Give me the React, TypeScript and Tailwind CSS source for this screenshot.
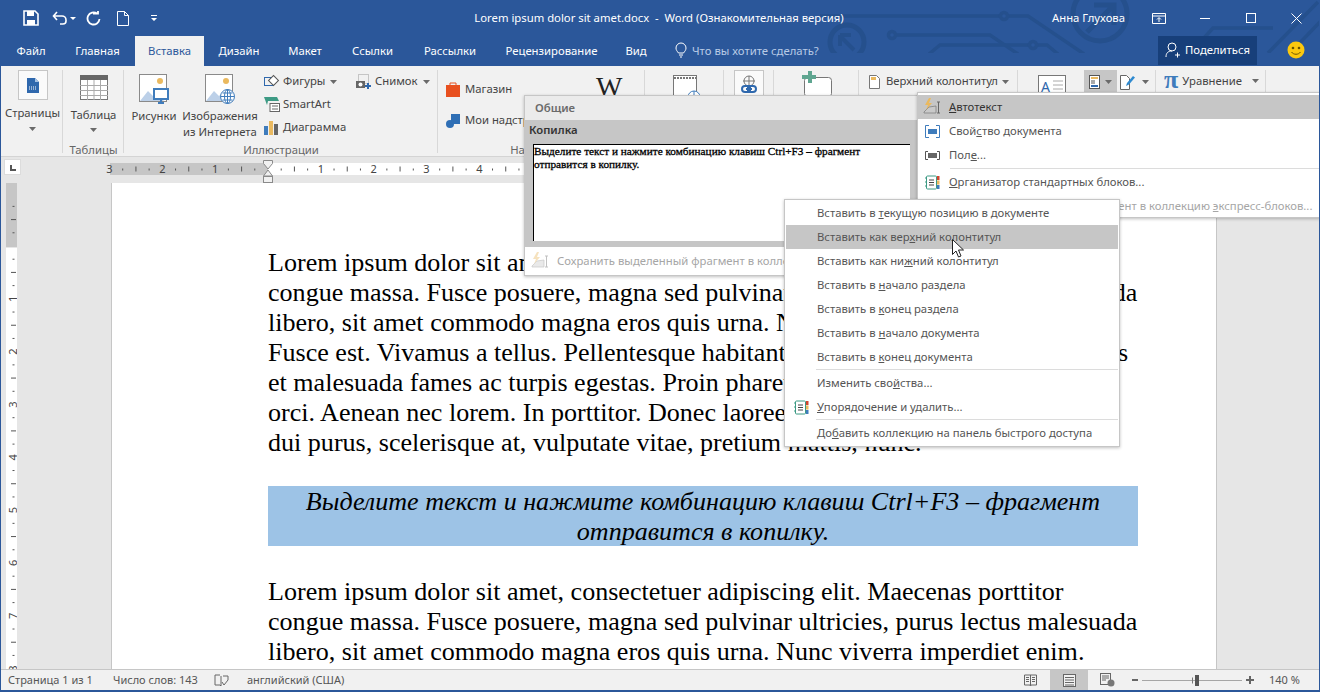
import React from "react";

const UI = "font-['Noto_Sans',sans-serif]";

const para1 = [
  "Lorem ipsum dolor sit amet, consectetuer adipiscing elit. Maecenas porttitor",
  "congue massa. Fusce posuere, magna sed pulvinar ultricies, purus lectus malesuada",
  "libero, sit amet commodo magna eros quis urna. Nunc viverra imperdiet enim.",
  "Fusce est. Vivamus a tellus. Pellentesque habitant morbi tristique senectus et netus",
  "et malesuada fames ac turpis egestas. Proin pharetra nonummy pede. Mauris et",
  "orci. Aenean nec lorem. In porttitor. Donec laoreet nonummy augue. Suspendisse",
  "dui purus, scelerisque at, vulputate vitae, pretium mattis, nunc.",
];
const para2 = para1.slice(0, 3);

const tabs = [
  ["Файл", 58], ["Главная", 75], ["Вставка", 69], ["Дизайн", 70], ["Макет", 62],
  ["Ссылки", 73], ["Рассылки", 82], ["Рецензирование", 121], ["Вид", 48],
] as const;

function Caret({ className = "" }: { className?: string }) {
  return (
    <svg width="7" height="4" viewBox="0 0 7 4" className={className}>
      <path d="M0 0h7L3.5 4z" fill="#6a6a6a" />
    </svg>
  );
}

function Group({ w, label, children, labelClass = "" }: { w: number; label?: string; children?: React.ReactNode; labelClass?: string }) {
  return (
    <div className="relative flex h-full shrink-0 flex-col" style={{ width: w }}>
      <div className="flex min-h-0 flex-1 overflow-visible">{children}</div>
      <div className={`h-[13px] text-center text-[11.3px] leading-[14px] text-[#666] ${labelClass}`}>{label}</div>
      <div className="absolute right-0 top-[4px] h-[83px] w-px bg-[#d8d8d8]" />
    </div>
  );
}

function SmallItem({ icon, text, caret }: { icon: React.ReactNode; text: string; caret?: boolean }) {
  return (
    <div className="flex h-[23px] items-center gap-[3px] whitespace-nowrap text-[11.3px] text-[#444]">
      <span className="flex w-[17px] shrink-0 justify-center">{icon}</span>
      {text}
      {caret && <Caret className="ml-[2px]" />}
    </div>
  );
}

function PictureIcon({ online }: { online?: boolean }) {
  return (
    <svg width="30" height="30" viewBox="0 0 30 30">
      <rect x=".5" y=".5" width="27" height="27" fill="#fff" stroke="#8a8a8a" />
      <circle cx="21" cy="7" r="3" fill="#eab95f" />
      <path d="M1 27l8-10 5 5 3-3 8 8z" fill="#bcd0e8" />
      {online ? (
        <g fill="#fff" stroke="#3f7cbc">
          <circle cx="22.500" cy="22.500" r="7" />
          <path d="M15.500 22.500h14M22.500 15.500v14M17.500 19h10M17.500 26h10" fill="none" />
          <ellipse cx="22.500" cy="22.500" rx="3" ry="7" fill="none" />
        </g>
      ) : (
        <g>
          <rect x="15" y="15" width="14" height="10" fill="#fff" stroke="#3f7cbc" strokeWidth="2" />
          <path d="M19 29h6M22 25v4" stroke="#3f7cbc" strokeWidth="2" />
        </g>
      )}
    </svg>
  );
}

function HRuler() {
  const base = 267;
  const u = 52.83;
  const items: React.ReactNode[] = [];
  for (let i = -12; i <= 20; i++) {
    const x = base + (i * u) / 4;
    if (x < 105 || x > 560 || i === 0) continue;
    const n = Math.abs(i) / 4;
    if (i % 4 === 0) {
      items.push(<text key={i} x={x} y={10} fontSize="11" fill="#444" textAnchor="middle" fontFamily="Noto Sans">{n}</text>);
    } else if (i % 2 === 0) {
      items.push(<path key={i} d={`M${x} 3.5v5`} stroke="#555" />);
    } else {
      items.push(<path key={i} d={`M${x} 5.5v2`} stroke="#555" />);
    }
  }
  return (
    <svg width="560" height="26" viewBox="0 0 560 26" className="block">
      <g transform="translate(0 6)">
        <rect x="109" width="158" height="12" fill="#c6c6c6" />
        <rect x="267" width="293" height="12" fill="#fff" />
        {items}
        <path d="M262.5 -2.5h9v3l-4.5 5.5l-4.5-5.5z" fill="#f1f1f1" stroke="#8a8a8a" />
        <path d="M262.5 13l4.5-6 4.5 6z" fill="#f1f1f1" stroke="#8a8a8a" />
        <rect x="262.5" y="13.5" width="9" height="6" fill="#f1f1f1" stroke="#8a8a8a" />
      </g>
    </svg>
  );
}

function VRuler() {
  const u = 52.83;
  const zero = 246;
  const items: React.ReactNode[] = [];
  for (let i = -3; i <= 36; i++) {
    const y = zero + (i * u) / 4;
    if (i === 0) continue;
    if (i % 4 === 0) {
      const n = Math.abs(i) / 4;
      items.push(
        <text key={i} x={0} y={0} fontSize="11" fill="#444" textAnchor="middle" fontFamily="Noto Sans" transform={`translate(10.5 ${y}) rotate(-90)`}>{n}</text>
      );
    } else if (i % 2 === 0) {
      items.push(<path key={i} d={`M5 ${y}h5`} stroke="#555" />);
    } else {
      items.push(<path key={i} d={`M6.500 ${y}h2`} stroke="#555" />);
    }
  }
  return (
    <svg width="11" height="486" viewBox="0 183 11 486" className="block">
      <rect x="0" y="183" width="11" height="64" fill="#c6c6c6" />
      <rect x="0" y="248" width="11" height="421" fill="#fff" />
      {items}
    </svg>
  );
}

function Organizer() {
  return (
    <svg width="15" height="15" viewBox="0 0 15 15">
      <rect x="1.5" y="1" width="10" height="13" rx="1" fill="#fff" stroke="#3d9a84" />
      <path d="M4 5h5M4 7.5h5M4 10h5" stroke="#444" />
      <path d="M0 3h2M0 7h2M0 11h2" stroke="#3d9a84" />
      <rect x="12" y="1" width="2.5" height="4" fill="#d2452f" />
      <rect x="12" y="5.5" width="2.5" height="4" fill="#eab95f" />
      <rect x="12" y="10" width="2.5" height="4" fill="#3f7cbc" />
    </svg>
  );
}

function AutoTextIcon({ muted }: { muted?: boolean }) {
  return (
    <svg width="18" height="18" viewBox="0 0 18 18" className={muted ? "opacity-40" : ""}>
      <path d="M1 14l5-5 7-1v7H1z" fill="#c9c9c9" stroke="#777" strokeWidth=".7" />
      <path d="M6 0L2 7h3l-2 5 6-7H6l2-5z" fill="#eab95f" />
      <path d="M14 4h3M14 15h3M15.5 4v11" stroke="#666" fill="none" />
    </svg>
  );
}

function CtxRow({ children, active, icon }: { children: React.ReactNode; active?: boolean; icon?: React.ReactNode }) {
  return (
    <div className={`flex h-[24px] items-center whitespace-nowrap ${active ? "bg-[#c6c6c6]" : ""}`}>
      <span className="flex w-[31px] justify-center">{icon}</span>
      <span>{children}</span>
    </div>
  );
}

function RightRow({ children, icon, active, muted }: { children: React.ReactNode; icon?: React.ReactNode; active?: boolean; muted?: boolean }) {
  return (
    <div className={`flex h-[24px] items-center whitespace-nowrap ${active ? "bg-[#c6c6c6] text-[#333]" : ""} ${muted ? "text-[#a6a6a6]" : ""}`}>
      <span className="flex w-[31px] justify-center pr-[3px]">{icon}</span>
      <span>{children}</span>
    </div>
  );
}

export default function App() {
  return (
    <div className={`relative flex h-[692px] w-[1320px] flex-col overflow-hidden border-x border-b-2 border-[#2b579a] bg-[#e6e6e6] ${UI}`}>
      {/* Blue header */}
      <div className="relative h-[66px] shrink-0 bg-[#2b579a] text-white">
        <svg width="1320" height="53" viewBox="0 0 1320 53" className="absolute left-[-1px] top-0" fill="none" stroke="#25508d" strokeWidth="3.500">
          <circle cx="847" cy="42" r="17" strokeWidth="5" />
          <path d="M840 36l14 14M840 35v11M840 35h11" strokeWidth="4" />
          <path d="M820 16h181M1007 16h21l56 38" />
          <circle cx="1004" cy="16" r="3.500" />
          <circle cx="892" cy="35" r="3.500" />
          <path d="M896 35h94l28 19" />
          <path d="M929 54l11-9h89M1037 45h10l11 9" />
          <circle cx="1033" cy="45" r="3.500" />
          <circle cx="1100" cy="14" r="27" strokeWidth="5" />
          <path d="M1087 32l26-26M1094 5h20v20" strokeWidth="5" />
          <path d="M1203 39l10-11h60M1268 53l50-51M1290 53l30-31" />
        </svg>
        {/* Title row */}
        <div className="relative flex h-[36px] items-center">
          <div className="flex items-center">
            <svg width="16" height="16" viewBox="0 0 16 16" className="ml-[22px]" fill="none">
              <path d="M1 1h11l3 3v11H1z" stroke="#fff" strokeWidth="1.6" />
              <rect x="4" y="1" width="7" height="5" fill="#fff" />
              <rect x="4" y="10" width="8" height="5" fill="#fff" />
            </svg>
            <svg width="16" height="14" viewBox="0 0 16 14" className="ml-[13px]" fill="none">
              <path d="M5 1L1.5 5 5 9M2 5h8a4 4 0 0 1 4 4v1a3 3 0 0 1-3 3H8" stroke="#fff" strokeWidth="1.6" />
            </svg>
            <svg width="6" height="3" viewBox="0 0 6 3" className="ml-[2px]"><path d="M0 0h6L3 3z" fill="#fff" /></svg>
            <svg width="15" height="15" viewBox="0 0 15 15" className="ml-[10px]" fill="none">
              <path d="M11 2.6A6 6 0 1 0 13.5 8M7 2.5h5V0" stroke="#fff" strokeWidth="1.8" />
            </svg>
            <svg width="12" height="15" viewBox="0 0 12 15" className="ml-[16px]" fill="none">
              <path d="M.5.5h7l4 4v10H.5zM7.5.5v4h4" stroke="#fff" />
            </svg>
            <svg width="6" height="6" viewBox="0 0 6 6" className="ml-[22px]"><path d="M0 0h6v1H0zM0 3h6L3 6z" fill="#fff" /></svg>
          </div>
          <div className="absolute left-[472px] w-[372px] whitespace-pre text-center text-[11.3px] text-white">Lorem ipsum dolor sit amet.docx  -  Word (Ознакомительная версия)</div>
          <div className="ml-auto flex items-center">
            <span className="w-[75px] whitespace-nowrap text-[11.3px]">Анна Глухова</span>
            <svg width="14" height="11" viewBox="0 0 14 11" className="ml-[25px]" fill="none">
              <path d="M.5.5h13v10H.5zM.5 3h13M7 9V5M5 6.5l2-2 2 2" stroke="#fff" />
            </svg>
            <svg width="10" height="1" viewBox="0 0 10 1" className="ml-[34px]"><rect width="10" height="1" fill="#fff" /></svg>
            <svg width="10" height="10" viewBox="0 0 10 10" className="ml-[36px]" fill="none"><rect x=".5" y=".5" width="9" height="9" stroke="#fff" /></svg>
            <svg width="11" height="11" viewBox="0 0 11 11" className="ml-[35px] mr-[17px]" fill="none"><path d="M.5.5l10 10M10.5.5l-10 10" stroke="#fff" /></svg>
          </div>
        </div>
        {/* Tabs row */}
        <div className="relative flex h-[30px] items-stretch pl-px text-[11.3px]">
          {tabs.map(([t, w]) => (
            <div
              key={t}
              style={{ width: w }}
              className={`flex items-center justify-center pt-[1px] ${t === "Вставка" ? "bg-[#f1f1f1] text-[#2b579a]" : "text-white"}`}
            >
              {t}
            </div>
          ))}
          <svg width="12" height="17" viewBox="0 0 12 17" className="ml-[15px] mt-[6px]" fill="none">
            <path d="M3.5 11C2 9 1 8 1 6a5 5 0 0 1 10 0c0 2-1 3-2.500 5zM4 13h4M5 15h2" stroke="#fff" />
          </svg>
          <div className="ml-[5px] flex items-center whitespace-nowrap text-[#b9cbe6]">Что вы хотите сделать?</div>
          <div className="absolute left-[1157px] flex h-[29px] w-[99px] items-center justify-center gap-[5px] bg-[#173f7a]">
            <svg width="15" height="17" viewBox="0 0 15 17" fill="none">
              <circle cx="7" cy="5" r="4" stroke="#fff" />
              <path d="M1 15c0-4 2-6 6-6M10 13h5M12.500 10.500v5" stroke="#fff" />
            </svg>
            <span>Поделиться</span>
          </div>
          <svg width="18" height="18" viewBox="0 0 18 18" className="absolute left-[1286px] top-[5px]">
            <circle cx="9" cy="9" r="8.500" fill="#fbc80e" />
            <circle cx="6" cy="7" r="1.300" fill="#6a5200" />
            <circle cx="12" cy="7" r="1.300" fill="#6a5200" />
            <path d="M4.500 11c2 3 7 3 9 0" fill="none" stroke="#6a5200" />
          </svg>
        </div>
      </div>

      {/* Ribbon */}
      <div className="flex h-[91px] shrink-0 border-b border-[#d4d4d4] bg-[#f1f1f1] pl-px">
        <Group w={61}>
          <div className="flex w-full flex-col items-center pt-[4px]">
            <div className="flex h-[30px] w-[30px] items-center justify-center border border-[#c6c6c6] bg-[#fafafa]">
              <svg width="12" height="15" viewBox="0 0 12 15"><path d="M0 0h8l4 4v11H0z" fill="#2f68ad" /><path d="M8 0l4 4H8z" fill="#a5c2e4" /><path d="M2 9h8M2 11h8" stroke="#fff" strokeDasharray="1 1" /></svg>
            </div>
            <span className="mt-[5px] text-[11.3px] leading-[16px] text-[#444]">Страницы</span>
            <Caret className="mt-[6px]" />
          </div>
        </Group>
        <Group w={61} label="Таблицы">
          <div className="flex w-full flex-col items-center pt-[9px]">
            <svg width="28" height="25" viewBox="0 0 28 25" fill="none">
              <rect x=".5" y=".5" width="27" height="24" fill="#fff" stroke="#777" />
              <rect width="28" height="5" fill="#666" />
              <path d="M0 10.500h28M0 15.500h28M0 20.500h28M7.500 5v20M14 5v20M20.500 5v20" stroke="#aaa" />
            </svg>
            <span className="mt-[7px] text-[11.3px] leading-[16px] text-[#444]">Таблица</span>
            <Caret className="mt-[5px]" />
          </div>
        </Group>
        <Group w={314} label="Иллюстрации">
          <div className="flex w-full">
            <div className="ml-[7px] flex w-[46px] flex-col items-center pt-[8px]">
              <PictureIcon />
              <span className="mt-[4px] whitespace-nowrap text-[11.3px] leading-[16px] text-[#444]">Рисунки</span>
            </div>
            <div className="ml-[5px] flex w-[76px] flex-col items-center pt-[8px]">
              <PictureIcon online />
              <span className="mt-[4px] whitespace-nowrap text-center text-[11.3px] leading-[16px] text-[#444]">Изображения<br />из Интернета</span>
            </div>
            <div className="ml-[5px] w-[92px] pt-[4px]">
              <SmallItem
                caret
                text="Фигуры"
                icon={<svg width="16" height="15" viewBox="0 0 16 15" fill="none"><rect x=".5" y="3.500" width="9" height="8" stroke="#2f68ad" /><rect x="6" y="3" width="7" height="7" transform="rotate(45 9.500 6.500)" fill="#fff" stroke="#555" /></svg>}
              />
              <SmallItem
                text="SmartArt"
                icon={<svg width="16" height="15" viewBox="0 0 16 15"><path d="M0 0h13l2 4H4l-1 4z" fill="#3d9a84" /><rect x="6" y="6.500" width="9.500" height="8" fill="#fff" stroke="#666" /><path d="M8 9h6M8 12h6" stroke="#666" /></svg>}
              />
              <SmallItem
                text="Диаграмма"
                icon={<svg width="15" height="14" viewBox="0 0 15 14"><rect y="5" width="4" height="9" fill="#3f7cbc" /><rect x="5" width="4" height="14" fill="#eab95f" /><rect x="10" y="3" width="4" height="11" fill="#666" /></svg>}
              />
            </div>
            <div className="pt-[4px]">
              <SmallItem
                caret
                text="Снимок"
                icon={<svg width="16" height="15" viewBox="0 0 16 15" fill="none"><rect x="2.500" y=".5" width="10" height="9" stroke="#999" strokeDasharray="1 1" /><rect y="7" width="9" height="7" fill="#666" /><circle cx="4.500" cy="10.500" r="2" fill="#fff" /><path d="M12 9v6M9 12h6" stroke="#2f68ad" strokeWidth="2" /></svg>}
              />
            </div>
          </div>
        </Group>
        <Group w={207} label="На" labelClass="pr-[48px]">
          <div className="relative flex w-full">
            <div className="ml-[8px] w-[141px] pt-[12px]">
              <div className="flex h-[23px] items-center gap-[5px] whitespace-nowrap text-[11.3px] text-[#444]">
                <svg width="14" height="15" viewBox="0 0 14 15"><path d="M0 3h14v12H0z" fill="#e8501f" /><path d="M4 3V1h6v2" fill="none" stroke="#e8501f" /></svg>
                Магазин
              </div>
              <div className="mt-[8px] flex h-[23px] items-center gap-[5px] whitespace-nowrap text-[11.3px] text-[#444]">
                <svg width="14" height="14" viewBox="0 0 14 14"><circle cx="4" cy="10" r="4" fill="#2f6fb5" /><rect x="5" y="0" width="9" height="10" fill="#2f6fb5" /></svg>
                Мои надстройки
              </div>
            </div>
            <div className="ml-[9px] pt-[8px] font-['Liberation_Serif',serif] text-[28px] leading-[26px] text-[#222]">W</div>
          </div>
        </Group>
        <Group w={79}>
          <div className="flex w-full justify-center pt-[9px]">
            <svg width="32" height="30" viewBox="0 0 32 30" fill="none"><rect x="4.500" y=".5" width="23" height="29" fill="#fff" stroke="#777" /><path d="M5 3h22" stroke="#777" strokeWidth="2" strokeDasharray="2 1" /><circle cx="25" cy="22" r="6" fill="#fff" stroke="#3f7cbc" /><path d="M19 22h12M25 16v12" stroke="#3f7cbc" /></svg>
          </div>
        </Group>
        <Group w={50}>
          <div className="flex w-full justify-center pt-[4px]">
            <div className="flex h-[30px] w-[30px] items-center justify-center border border-[#c6c6c6] bg-[#fafafa]">
              <svg width="18" height="20" viewBox="0 0 18 20" fill="none"><circle cx="9" cy="6" r="5" stroke="#777" /><path d="M3 6h12M9 1v10" stroke="#777" /><path d="M2 14a3 3 0 0 1 3-3h3v6H5a3 3 0 0 1-3-3zM16 14a3 3 0 0 0-3-3h-3v6h3a3 3 0 0 0 3-3zM6 14h6" stroke="#2f68ad" strokeWidth="2" /></svg>
            </div>
          </div>
        </Group>
        <Group w={85}>
          <div className="flex w-full justify-center pt-[5px]">
            <svg width="32" height="28" viewBox="0 0 32 28" fill="none"><rect x="3.500" y="6.500" width="27" height="19" rx="3" fill="#fff" stroke="#777" /><path d="M7 0h4v4h4v4h-4v4H7V8H1V4h6z" fill="#5fa590" /></svg>
          </div>
        </Group>
        <Group w={159}>
          <div className="w-full pl-[10px] pt-[4px]">
            <div className="flex h-[23px] items-center gap-[6px] whitespace-nowrap text-[11.3px] text-[#444]">
              <svg width="11" height="14" viewBox="0 0 11 14" fill="none"><path d="M.5.5h7l3 3v10H.5z" fill="#fff" stroke="#777" /><rect x="2" y="2" width="5" height="3" fill="#eab95f" /></svg>
              Верхний колонтитул
              <Caret className="ml-[-2px]" />
            </div>
          </div>
        </Group>
        <Group w={138}>
          <div className="flex w-full pt-[4px]">
            <svg width="28" height="25" viewBox="0 0 28 25" fill="none" className="ml-[20px] mt-[5px]"><rect x=".5" y=".5" width="27" height="24" fill="#fff" stroke="#777" /><text x="3" y="17" fontSize="14" fill="#2f68ad" fontFamily="Noto Sans">А</text><path d="M15 6h10M15 10h10M15 14h10M15 18h10" stroke="#aaa" /></svg>
            <div className="ml-[18px] flex h-[24px] w-[33px] items-center gap-[5px] bg-[#c6c6c6] pl-[5px]">
              <svg width="11" height="14" viewBox="0 0 11 14" fill="none"><rect x=".5" y=".5" width="10" height="13" fill="#fff" stroke="#555" /><rect x="2" y="2" width="7" height="2" fill="#eab95f" /><path d="M2 6h4M2 8h4" stroke="#555" /><rect x="2" y="10" width="7" height="2" fill="#2f68ad" /></svg>
              <Caret />
            </div>
            <div className="ml-[3px] flex h-[24px] items-center gap-[7px]">
              <svg width="15" height="16" viewBox="0 0 15 16" fill="none"><path d="M.5 1.500h6l3 3v11h-9z" fill="#fff" stroke="#666" /><path d="M6 12l1-3 6-7 2 1.500-6 7z" fill="#2f8ad0" /></svg>
              <Caret />
            </div>
          </div>
        </Group>
        <Group w={110}>
          <div className="flex w-full items-start pl-[8px] pt-[3px]">
            <div className="flex h-[24px] items-center whitespace-nowrap text-[11.3px] text-[#444]">
              <span className="mr-[4px] mt-[-3px] font-['Liberation_Serif',serif] text-[26px] font-bold leading-none text-[#3f7cbc]">π</span>
              Уравнение
              <Caret className="ml-[10px]" />
            </div>
          </div>
        </Group>
      </div>

      {/* Ruler */}
      <div className="flex h-[26px] shrink-0 items-start bg-[#e6e6e6]">
        <div className="ml-[4px] mt-[3px] flex h-[14px] w-[15px] items-end justify-center bg-white pb-[3px] shadow-[0_0_0_1px_#dcdcdc]">
          <svg width="6" height="6" viewBox="0 0 6 6"><path d="M0 0h2v4h4v2H0z" fill="#555" /></svg>
        </div>
        <div className="ml-[-19px]"><HRuler /></div>
      </div>

      {/* Document */}
      <div className="flex min-h-0 flex-1 overflow-hidden">
        <div className="ml-[5px] w-[11px] shrink-0"><VRuler /></div>
        <div className="ml-[94px] w-[1106px] shrink-0 overflow-hidden border-x border-[#c6c6c6] bg-white pl-[156px] pt-[65px] font-['Liberation_Serif',serif] text-[26.07px] leading-[30px] text-black">
          {para1.map((l) => <div key={l} className="whitespace-nowrap">{l}</div>)}
          <div className="mb-[31px] mt-[28px] h-[60px] w-[870px] bg-[#9dc3e6] pt-[1px] text-center italic">
            <div>Выделите текст и нажмите комбинацию клавиш Ctrl+F3 – фрагмент</div>
            <div>отправится в копилку.</div>
          </div>
          {para2.map((l) => <div key={l + "2"} className="whitespace-nowrap">{l}</div>)}
        </div>
      </div>

      {/* Status bar */}
      <div className="flex h-[21px] shrink-0 items-center border-t border-[#c6c6c6] bg-[#f1f1f1] text-[11px] text-[#555]">
        <span className="ml-[7px] w-[105px]">Страница 1 из 1</span>
        <span className="w-[101px]">Число слов: 143</span>
        <svg width="15" height="13" viewBox="0 0 15 13" fill="none"><path d="M6 1H1v10h5l1 1M7 2v10M9 2h5v4M8 8l2 3 4-5" stroke="#666" /></svg>
        <span className="ml-[18px]">английский (США)</span>
        <div className="ml-auto flex h-full items-center">
          <svg width="13" height="13" viewBox="0 0 13 13" fill="none" className="mr-[13px]"><path d="M.5 1h12v10H7l-.5 1-.5-1H.5zM6.500 1v10M2 3.500h3M2 5.500h3M2 7.500h3M8 3.500h3M8 5.500h3M8 7.500h3" stroke="#666" /></svg>
          <div className="flex h-full w-[38px] items-center justify-center bg-[#c6c6c6]">
            <svg width="13" height="13" viewBox="0 0 13 13" fill="none"><rect x=".5" y=".5" width="12" height="12" fill="#f1f1f1" stroke="#666" /><path d="M2 3.500h9M2 6h9M2 8.500h9M2 11h9" stroke="#666" /></svg>
          </div>
          <svg width="15" height="14" viewBox="0 0 15 14" fill="none" className="ml-[12px]"><rect x=".5" y=".5" width="10" height="11" stroke="#666" /><path d="M2 3h7M2 5h7M2 7h4" stroke="#666" /><circle cx="11" cy="10" r="3.500" fill="#777" /></svg>
          <svg width="6" height="2" viewBox="0 0 6 2" className="ml-[17px]"><rect width="6" height="2" fill="#666" /></svg>
          <svg width="100" height="13" viewBox="0 0 100 13" className="ml-[4px]"><path d="M0 6.500h100" stroke="#a6a6a6" /><path d="M50.500 3.500v6" stroke="#777" /><rect x="53" y="1" width="4" height="11" fill="#555" /></svg>
          <svg width="8" height="8" viewBox="0 0 8 8" className="ml-[4px]"><path d="M3 0h2v3h3v2H5v3H3V5H0V3h3z" fill="#666" /></svg>
          <span className="ml-[15px] w-[50px] whitespace-nowrap">140 %</span>
        </div>
      </div>

      {/* Gallery flyout */}
      <div className="absolute left-[523px] top-[95px] h-[181px] w-[394px] border border-[#c6c6c6] bg-white shadow-[0_1px_3px_rgba(0,0,0,0.25)]">
        <div className="flex h-[24px] items-center bg-[#ebebeb] pl-[10px] text-[11.3px] font-semibold text-[#6a6a6a]">Общие</div>
        <div className="h-[127px] bg-[#c6c6c6] pl-[8px] pr-[7px]">
          <div className="flex h-[24px] items-start text-[11.3px] font-semibold leading-[20px] text-[#333]">
            <span className="ml-[-4px]">Копилка</span>
          </div>
          <div className="h-[97px] border-l border-t border-black bg-white font-['Liberation_Serif',serif] text-[11.25px] leading-[13px] text-black [-webkit-text-stroke:0.3px_#000]">
            Выделите текст и нажмите комбинацию клавиш Ctrl+F3 – фрагмент<br />отправится в копилку.
          </div>
        </div>
        <div className="flex h-[28px] items-center whitespace-nowrap pl-[6px] text-[11.3px] text-[#a6a6a6]">
          <AutoTextIcon muted />
          <span className="ml-[8px]">Сохранить выделенный фрагмент в коллекцию</span>
        </div>
      </div>

      {/* Quick parts menu */}
      <div className="absolute left-[916px] top-[92px] h-[126px] w-[404px] border-y border-l border-[#c6c6c6] bg-white pt-[2px] text-[11.3px] text-[#555] shadow-[0_1px_3px_rgba(0,0,0,0.25)]">
        <RightRow active icon={<AutoTextIcon />}><u>А</u>втотекст</RightRow>
        <RightRow icon={<svg width="15" height="13" viewBox="0 0 15 13" fill="none"><path d="M4 .5H.5v12H4M11 .5h3.500v12H11" stroke="#3f7cbc" /><rect x="3" y="4" width="9" height="5" fill="#3f7cbc" /></svg>}>Свой<u>с</u>тво документа</RightRow>
        <RightRow icon={<svg width="15" height="9" viewBox="0 0 15 9" fill="none"><path d="M3 .5H.5v8H3M12 .5h2.500v8H12" stroke="#555" /><rect x="3" y="2" width="9" height="5" fill="#666" /></svg>}>Пол<u>е</u>...</RightRow>
        <div className="my-[1px] ml-[32px] h-px bg-[#dcdcdc]" />
        <RightRow icon={<Organizer />}><u>О</u>рганизатор стандартных блоков...</RightRow>
        <RightRow muted>Сохранить выделенный фрагмент в коллекцию <u>э</u>кспресс-блоков...</RightRow>
      </div>

      {/* Context menu */}
      <div className="absolute left-[783px] top-[199px] w-[336px] border border-[#c6c6c6] bg-white p-px text-[11.3px] text-[#555] shadow-[0_1px_3px_rgba(0,0,0,0.25)]">
        <CtxRow>Вставить в <u>т</u>екущую позицию в документе</CtxRow>
        <CtxRow active>Вставить как вер<u>х</u>ний колонтитул</CtxRow>
        <CtxRow>Вставить как ни<u>ж</u>ний колонтитул</CtxRow>
        <CtxRow>Вставить в <u>н</u>ачало раздела</CtxRow>
        <CtxRow>Вставить в <u>к</u>онец раздела</CtxRow>
        <CtxRow>Вставить в <u>н</u>ачало документа</CtxRow>
        <CtxRow>Вставить в <u>к</u>онец документа</CtxRow>
        <div className="mb-px ml-[30px] h-px bg-[#dcdcdc]" />
        <CtxRow>Изменить сво<u>й</u>ства...</CtxRow>
        <CtxRow icon={<Organizer />}><u>У</u>порядочение и удалить...</CtxRow>
        <div className="mb-px ml-[30px] h-px bg-[#dcdcdc]" />
        <CtxRow>До<u>б</u>авить коллекцию на панель быстрого доступа</CtxRow>
        <svg width="13" height="20" viewBox="0 0 13 20" className="absolute left-[167px] top-[39px]">
          <path d="M.5.5v15l3.500-3.500 2.500 6 2.500-1-2.500-6h5z" fill="#fff" stroke="#222" />
        </svg>
      </div>
    </div>
  );
}
